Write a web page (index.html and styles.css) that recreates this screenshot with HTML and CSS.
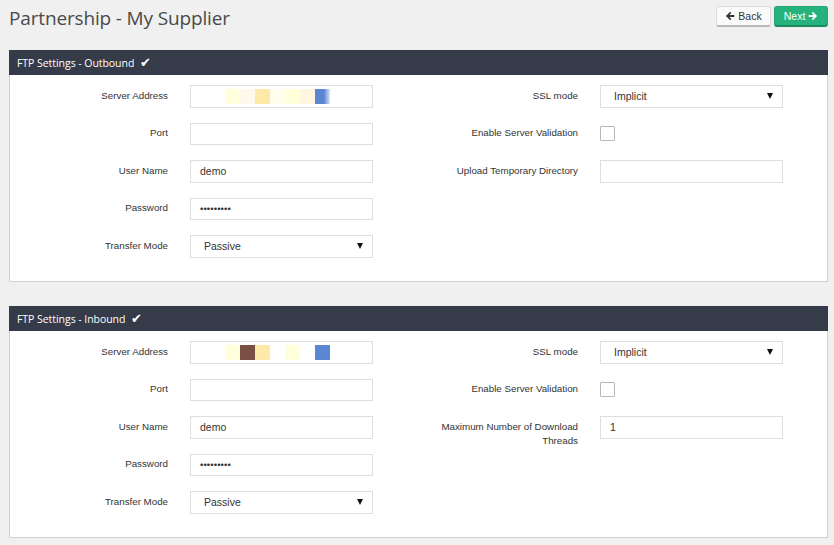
FILE: index.html
```html
<!DOCTYPE html>
<html lang="en">
<head>
<meta charset="utf-8">
<title>Partnership - My Supplier</title>
<link rel="stylesheet" href="styles.css">
</head>
<body>
<div class="page">
  <header class="topbar">
    <h1 class="title">Partnership - My Supplier</h1>
    <div class="actions">
      <button class="btn btn-back" type="button">
        <svg class="ico" viewBox="0 0 16 16" width="10" height="10"><path d="M8.2 1.3 10.1 3.2 6.8 6.5H15v3H6.8l3.3 3.3-1.9 1.9L1.5 8z" fill="#333"/></svg>Back
      </button>
      <button class="btn btn-next" type="button">Next
        <svg class="ico" viewBox="0 0 16 16" width="10" height="10"><path d="M7.8 1.3 5.9 3.2l3.3 3.3H1v3h8.2l-3.3 3.3 1.9 1.9L14.5 8z" fill="#fff"/></svg>
      </button>
    </div>
  </header>

  <section class="panel">
    <div class="panel-head">FTP Settings - Outbound <span class="check">✔</span></div>
    <div class="panel-body">
      <div class="col col-left">
        <div class="row"><label class="lbl">Server Address</label>
          <div class="field addr">
            <span class="px" style="background:#ffffdc"></span><span class="px" style="background:#fff8ec"></span><span class="px" style="background:#ffe9a8"></span><span class="px" style="background:#fffdec"></span><span class="px" style="background:#ffffd8"></span><span class="px" style="background:#fff6e2"></span><span class="px px-fade" style="background:linear-gradient(90deg,#5a86d4 60%,#dde6f7)"></span>
          </div>
        </div>
        <div class="row"><label class="lbl">Port</label><div class="field"></div></div>
        <div class="row"><label class="lbl">User Name</label><div class="field">demo</div></div>
        <div class="row"><label class="lbl">Password</label><div class="field dots">•••••••••</div></div>
        <div class="row"><label class="lbl">Transfer Mode</label><div class="field select"><span>Passive</span><span class="caret"></span></div></div>
      </div>
      <div class="col col-right">
        <div class="row"><label class="lbl">SSL mode</label><div class="field select"><span>Implicit</span><span class="caret"></span></div></div>
        <div class="row"><label class="lbl">Enable Server Validation</label><div class="cbwrap"><span class="cb"></span></div></div>
        <div class="row"><label class="lbl">Upload Temporary Directory</label><div class="field"></div></div>
      </div>
    </div>
  </section>

  <section class="panel">
    <div class="panel-head">FTP Settings - Inbound <span class="check">✔</span></div>
    <div class="panel-body">
      <div class="col col-left">
        <div class="row"><label class="lbl">Server Address</label>
          <div class="field addr">
            <span class="px" style="background:#ffffdc"></span><span class="px" style="background:#7b5044"></span><span class="px" style="background:#ffe9a8"></span><span class="px" style="background:#ffffff"></span><span class="px" style="background:#ffffdc"></span><span class="px" style="background:#ffffff"></span><span class="px" style="background:#5a86d4"></span>
          </div>
        </div>
        <div class="row"><label class="lbl">Port</label><div class="field"></div></div>
        <div class="row"><label class="lbl">User Name</label><div class="field">demo</div></div>
        <div class="row"><label class="lbl">Password</label><div class="field dots">•••••••••</div></div>
        <div class="row"><label class="lbl">Transfer Mode</label><div class="field select"><span>Passive</span><span class="caret"></span></div></div>
      </div>
      <div class="col col-right">
        <div class="row"><label class="lbl">SSL mode</label><div class="field select"><span>Implicit</span><span class="caret"></span></div></div>
        <div class="row"><label class="lbl">Enable Server Validation</label><div class="cbwrap"><span class="cb"></span></div></div>
        <div class="row"><label class="lbl">Maximum Number of Download Threads</label><div class="field">1</div></div>
      </div>
    </div>
  </section>
</div>
</body>
</html>
```
FILE: styles.css
```css
* { box-sizing: border-box; }
html, body { margin: 0; padding: 0; }
body {
  background: #f0f0f0;
  font-family: "Liberation Sans", Arial, sans-serif;
  color: #333;
  width: 834px;
  height: 545px;
  overflow: hidden;
}
.page { padding: 0 6px 0 9px; }

.topbar {
  height: 50px;
  display: flex;
  justify-content: space-between;
  align-items: flex-start;
  padding-top: 6px;
}
.title {
  margin: 0;
  font-family: "Open Sans", "DejaVu Sans", sans-serif;
  font-weight: 400;
  font-size: 19px;
  letter-spacing: -0.15px;
  line-height: 24px;
  color: #4a4a4a;
}
.actions { display: flex; gap: 3px; }
.btn {
  height: 21px;
  border-radius: 3px;
  font-family: "Liberation Sans", Arial, sans-serif;
  font-size: 10.5px;
  display: flex;
  align-items: center;
  justify-content: center;
  gap: 3px;
  padding: 0;
  cursor: pointer;
}
.btn-back {
  width: 55px;
  background: #fafafa;
  color: #333;
  border: 1px solid #ddd;
  border-bottom: 2px solid #b9b9b9;
}
.btn-next {
  width: 54px;
  background: #26b27c;
  color: #fff;
  border: 1px solid #24a673;
  border-bottom: 2px solid #1c8a5f;
}
.ico { display: block; }

.panel { margin-bottom: 24px; }
.panel-head {
  height: 25px;
  background: #353b48;
  color: #fff;
  font-family: "Open Sans", "DejaVu Sans", sans-serif;
  font-size: 10.5px;
  letter-spacing: -0.05px;
  line-height: 25px;
  padding-left: 8px;
}
.check {
  font-family: "DejaVu Sans", sans-serif;
  font-size: 13px;
  margin-left: 3px;
}
.panel-body {
  background: #fff;
  border: 1px solid #d0d0d0;
  border-top: none;
  display: grid;
  grid-template-columns: 409px 1fr;
  padding: 10px 0 23.5px;
}
.col { display: flex; flex-direction: column; gap: 15px; }
.col-left { padding-left: 17px; }
.col-right { padding-left: 18px; }
.row {
  display: grid;
  grid-template-columns: 141px 183px;
  column-gap: 22px;
  align-items: start;
}
.lbl {
  text-align: right;
  font-size: 9.75px;
  line-height: 14px;
  padding-top: 3.5px;
  color: #333;
}
.field {
  height: 22.5px;
  border: 1px solid #dedede;
  background: #fff;
  font-size: 10.5px;
  line-height: 20.5px;
  padding: 0 9px;
  color: #333;
}
.dots { font-size: 9.5px; letter-spacing: 0.1px; }
.select {
  display: flex;
  justify-content: space-between;
  align-items: center;
  padding: 0 9px 0 13px;
}
.caret {
  width: 0; height: 0;
  border-left: 3px solid transparent;
  border-right: 3px solid transparent;
  border-top: 6px solid #111;
}
.addr {
  display: flex;
  align-items: center;
  padding-left: 34px;
}
.px { width: 15px; height: 15px; display: block; }
.cbwrap { height: 22.5px; display: flex; align-items: center; }
.cb {
  width: 15px; height: 15px;
  border: 1px solid #b8b8b8;
  border-radius: 1px;
  background: #fff;
  display: block;
}
```
